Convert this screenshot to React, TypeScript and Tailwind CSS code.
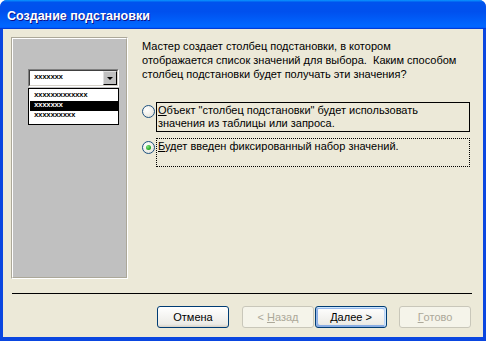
import React from "react";

const Radio = ({ checked }: { checked?: boolean }) => (
  <div className="w-[13px] h-[13px] shrink-0 rounded-full border border-[#1c5180] bg-[radial-gradient(circle_at_35%_35%,#ffffff_0%,#f4f3ee_40%,#dcdad0_100%)] flex items-center justify-center">
    {checked && (
      <div className="w-[5px] h-[5px] rounded-full bg-[radial-gradient(circle_at_35%_35%,#7ee57a_0%,#21a121_70%,#1a8a1a_100%)]" />
    )}
  </div>
);

const Btn = ({
  children,
  disabled,
  def,
  className = "",
}: {
  children: React.ReactNode;
  disabled?: boolean;
  def?: boolean;
  className?: string;
}) => {
  const base =
    "w-[72px] h-[22px] shrink-0 rounded-[3px] border flex items-center justify-center text-[11px] leading-none ";
  const look = disabled
    ? "border-[#c9c7ba] bg-[#f5f4ea] text-[#aca899]"
    : def
    ? "border-[#003c74] bg-[linear-gradient(180deg,#ffffff,#ecebe6_86%,#d6d0c5)] text-black shadow-[inset_-1px_1px_#cee7ff,inset_1px_2px_#98b8ea,inset_-2px_2px_#bcd4f6,inset_1px_-1px_#89ade4,inset_2px_-2px_#89ade4]"
    : "border-[#003c74] bg-[linear-gradient(180deg,#ffffff,#ecebe6_86%,#d6d0c5)] text-black";
  return <div className={base + look + " " + className}>{children}</div>;
};

export default function App() {
  return (
    <div className="w-[486px] h-[341px] bg-[#0a46e0] rounded-t-[7px] overflow-hidden flex flex-col font-['Liberation_Sans',Arial,sans-serif] select-none">
      {/* Title bar */}
      <div className="h-[29px] shrink-0 flex items-center pl-[7px] pt-[4px] bg-[linear-gradient(180deg,#0997ff,#0053ee_8%,#0050ee_40%,#0066ff_88%,#0066ff_93%,#005bff_95%,#003dd7_96%,#003dd7)]">
        <span className="text-white font-bold text-[12.5px] [text-shadow:1px_1px_#0f1089]">
          Создание подстановки
        </span>
      </div>

      {/* Client area */}
      <div className="flex-1 ml-[3px] mr-[3px] mb-[4px] bg-[#ece9d8] flex flex-col">
        <div className="h-[264px] shrink-0 flex items-start">
          {/* Picture panel */}
          <div className="ml-[8px] mt-[8px] w-[117px] h-[242px] border border-t-[#aca899] border-l-[#aca899] border-r-white border-b-white">
            <div className="w-full h-full bg-[#c0c0c0] border border-t-white border-l-white border-r-[#aca899] border-b-[#aca899] pl-[15px] pt-[30px]">
              <div className="w-[91px] flex flex-col">
                {/* Combo */}
                <div className="h-[18px] border border-t-[#808080] border-l-[#808080] border-r-white border-b-white">
                  <div className="h-full bg-white border border-t-[#404040] border-l-[#404040] border-r-[#d4d0c8] border-b-[#d4d0c8] flex items-center justify-between">
                    <span className="pl-[4px] font-['Liberation_Mono',monospace] font-bold text-[7.5px] leading-none tracking-[-0.4px] text-black">
                      xxxxxxx
                    </span>
                    <div className="w-[14px] h-full bg-[#c0c0c0] border border-t-[#dfdfdf] border-l-[#dfdfdf] border-r-black border-b-black flex items-center justify-center">
                      <div className="w-0 h-0 border-l-[3px] border-r-[3px] border-t-[3px] border-l-transparent border-r-transparent border-t-black" />
                    </div>
                  </div>
                </div>
                {/* List */}
                <div className="mt-[1px] border border-black bg-white pt-[2px] pb-[3px] flex flex-col">
                  {["xxxxxxxxxxxxx", "xxxxxxx", "xxxxxxxxxx"].map((t, i) => (
                    <div
                      key={i}
                      className={
                        "h-[10px] ml-[1px] flex items-center pl-[4px] font-['Liberation_Mono',monospace] font-bold text-[7.5px] leading-none tracking-[-0.4px] " +
                        (i === 1 ? "bg-black text-white" : "text-black")
                      }
                    >
                      {t}
                    </div>
                  ))}
                </div>
              </div>
            </div>
          </div>

          {/* Right content */}
          <div className="ml-[14px] mt-[10px] flex flex-col text-[11px] text-black">
            <p className="leading-[14px] whitespace-nowrap">
              Мастер создает столбец подстановки, в котором
              <br />
              отображается список значений для выбора.&nbsp; Каким способом
              <br />
              столбец подстановки будет получать эти значения?
            </p>

            <div className="mt-[21px] flex items-start">
              <div className="mt-[3px]">
                <Radio />
              </div>
              <div className="ml-[1px] w-[314px] h-[30px] border border-black pl-[1px] pt-[1px] leading-[13px] whitespace-nowrap">
                <u className="underline-offset-[1px]">О</u>бъект "столбец подстановки" будет использовать
                <br />
                значения из таблицы или запроса.
              </div>
            </div>

            <div className="mt-[6px] flex items-start">
              <div className="mt-[3px]">
                <Radio checked />
              </div>
              <div className="ml-[1px] w-[314px] h-[29px] border border-dotted border-black pl-[1px] pt-[1px] leading-[13px] whitespace-nowrap">
                <u className="underline-offset-[1px]">Б</u>удет введен фиксированный набор значений.
              </div>
            </div>
          </div>
        </div>

        {/* Separator */}
        <div className="ml-[9px] w-[460px] h-[1px] bg-black" />

        {/* Buttons */}
        <div className="mt-[12px] flex">
          <Btn className="ml-[154px]">Отмена</Btn>
          <Btn disabled className="ml-[13px]">
            &lt;&nbsp;<u className="underline-offset-[1px]">Н</u>азад
          </Btn>
          <Btn def className="ml-[1px]">
            <u className="underline-offset-[1px]">Д</u>алее &gt;
          </Btn>
          <Btn disabled className="ml-[12px]">
            <u className="underline-offset-[1px]">Г</u>отово
          </Btn>
        </div>
      </div>
    </div>
  );
}
